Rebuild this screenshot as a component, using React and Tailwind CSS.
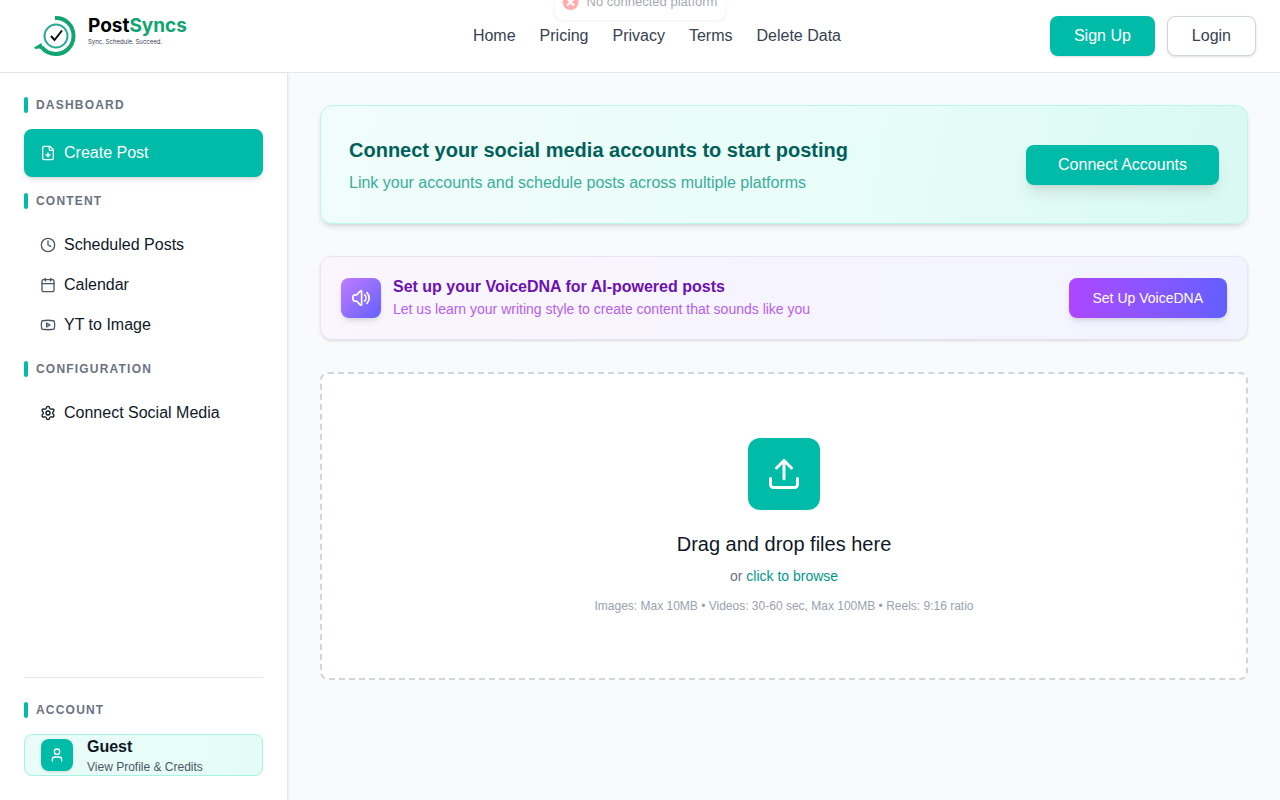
import React from 'react';
import { FilePlus, Clock, Calendar, Youtube, Settings, User, Upload, X } from 'lucide-react';

const NAV_LINKS = ['Home', 'Pricing', 'Privacy', 'Terms', 'Delete Data'];

const CONTENT_ITEMS = [
  { label: 'Scheduled Posts', icon: Clock },
  { label: 'Calendar', icon: Calendar },
  { label: 'YT to Image', icon: Youtube },
];

function Logo() {
  return (
    <a href="#" className="flex w-60 items-center pl-2">
      <svg className="h-12 w-12" viewBox="0 0 48 48" fill="none">
        <path d="M23 6C33.500 5.500 41.500 13.500 41.500 24C41.500 34 33.500 42 24 42C18 42 13 39.500 9.500 35" stroke="#12a571" strokeWidth="4" />
        <path d="M2 35.500L9.500 31L11 38L7.500 36.500L3.500 37Z" fill="#12a571" />
        <circle cx="24" cy="24" r="11.500" stroke="#2fa999" strokeWidth="2" />
        <path d="M19 24L22.500 28L30 18.500" stroke="#0b0f14" strokeWidth="2" />
      </svg>
      <span className="ml-2 flex flex-col pb-3 font-['Inter',sans-serif]">
        <span className="text-[19px] leading-6 font-bold text-black">
          Post<span className="text-[#12a571]">Syncs</span>
        </span>
        <span className="text-[6px] leading-2 text-gray-700">Sync. Schedule. Succeed.</span>
      </span>
    </a>
  );
}

function SpeakerIcon({ className }) {
  return (
    <svg className={className} viewBox="0 0 24 24" fill="none" stroke="currentColor" strokeWidth="2" strokeLinecap="round" strokeLinejoin="round">
      <path d="M19.114 5.636a9 9 0 0 1 0 12.728M16.463 8.288a5.25 5.25 0 0 1 0 7.424M6.75 8.25l4.72-4.72a.75.75 0 0 1 1.28.53v15.88a.75.75 0 0 1-1.28.53l-4.72-4.72H4.51c-.88 0-1.704-.507-1.938-1.354A9.009 9.009 0 0 1 2.25 12c0-.83.112-1.633.322-2.396C2.806 8.756 3.63 8.25 4.51 8.25H6.75Z" />
    </svg>
  );
}

function SectionLabel({ children }) {
  return (
    <h2 className="mb-4 flex items-center gap-2 text-xs font-bold tracking-widest text-gray-500 uppercase">
      <span className="h-4 w-1 rounded-full bg-teal-500" />
      {children}
    </h2>
  );
}

function SidebarItem({ icon: Icon, label, iconClass = 'text-gray-600' }) {
  return (
    <a href="#" className="flex h-10 items-center gap-2 rounded-lg px-4 text-gray-900">
      <Icon className={`h-4 w-4 ${iconClass}`} />
      {label}
    </a>
  );
}

export default function App() {
  return (
    <div className="flex min-h-screen flex-col bg-[#f9fafc] font-['Liberation_Sans',Arial,sans-serif] text-base">
      {/* Toast sliding out of view */}
      <div role="status" className="absolute -top-4 left-1/2 z-20 flex h-9 -translate-x-1/2 items-center gap-2 rounded-lg bg-white px-2 text-[13px] text-gray-700 opacity-45 shadow-sm">
        <span className="flex h-4 w-4 items-center justify-center rounded-full bg-[#ff4b4b]">
          <X className="h-3 w-3 text-white" strokeWidth={4} />
        </span>
        <span className="leading-5">No connected platform</span>
      </div>

      <header className="flex items-center justify-between border-b border-gray-200 bg-white px-6 py-4">
        <div className="-my-1">
          <Logo />
        </div>
        <nav className="flex gap-6 text-gray-700">
          {NAV_LINKS.map((link) => (
            <a key={link} href="#">{link}</a>
          ))}
        </nav>
        <div className="flex gap-3">
          <button className="h-10 rounded-lg bg-teal-500 px-6 text-white shadow-sm">Sign Up</button>
          <button className="h-10 rounded-lg border border-gray-300 bg-white px-6 text-gray-700 shadow-sm">Login</button>
        </div>
      </header>

      <div className="flex flex-1">
        {/* Sidebar */}
        <aside className="flex w-72 shrink-0 flex-col border-r border-gray-200 bg-white p-6 shadow-sm">
          <SectionLabel>Dashboard</SectionLabel>
          <a href="#" className="mb-4 flex h-12 items-center gap-2 rounded-lg bg-teal-500 px-4 text-white shadow-md">
            <FilePlus className="h-4 w-4" />
            Create Post
          </a>

          <SectionLabel>Content</SectionLabel>
          <div className="mb-4">
            {CONTENT_ITEMS.map((item) => (
              <SidebarItem key={item.label} icon={item.icon} label={item.label} />
            ))}
          </div>

          <SectionLabel>Configuration</SectionLabel>
          <SidebarItem icon={Settings} label="Connect Social Media" iconClass="text-gray-900" />

          <div className="mt-auto border-t border-gray-200 pt-6">
            <SectionLabel>Account</SectionLabel>
            <a href="#" className="flex items-center gap-3.5 rounded-lg border border-[#a5f3e0] bg-linear-to-r from-[#eafdf8] to-[#e4fcf7] px-4">
              <span className="flex h-8 w-8 items-center justify-center rounded-lg bg-teal-500 text-white shadow-sm">
                <User className="h-4 w-4" />
              </span>
              <span className="flex flex-col">
                <span className="font-bold text-gray-900">Guest</span>
                <span className="text-xs text-gray-600">View Profile &amp; Credits</span>
              </span>
            </a>
          </div>
        </aside>

        {/* Main area */}
        <main className="flex min-w-0 flex-1 flex-col gap-8 p-8">
          <section className="flex items-center justify-between rounded-xl border border-[#b9f8e8] bg-[linear-gradient(100deg,#f0fdfa,#eafdf9_50%,#d9f9f2)] p-7 shadow-md">
            <div>
              <h1 className="text-xl leading-8 font-bold text-teal-800">Connect your social media accounts to start posting</h1>
              <p className="mt-[5px] text-[#3aad9b]">Link your accounts and schedule posts across multiple platforms</p>
            </div>
            <button className="h-10 rounded-lg bg-teal-500 px-8 text-white shadow-lg">Connect Accounts</button>
          </section>

          <section className="flex items-center justify-between rounded-xl border border-[#e9e3f5] bg-linear-to-r from-purple-50 to-[#f2f4ff] px-5 py-[19px] shadow-sm">
            <div className="flex items-center gap-3">
              <span className="flex h-10 w-10 items-center justify-center rounded-lg bg-linear-to-br from-purple-400 to-indigo-500 text-white shadow-md">
                <SpeakerIcon className="h-5 w-5" />
              </span>
              <div>
                <h2 className="leading-[22px] font-bold text-purple-800">Set up your VoiceDNA for AI-powered posts</h2>
                <p className="text-sm leading-[22px] text-[#b660ea]">Let us learn your writing style to create content that sounds like you</p>
              </div>
            </div>
            <button className="h-10 rounded-lg bg-linear-to-r from-purple-500 to-indigo-500 px-6 text-sm text-white shadow-md">Set Up VoiceDNA</button>
          </section>

          <section className="flex flex-col items-center rounded-lg border-2 border-dashed border-gray-300 bg-white p-16">
            <span className="flex h-18 w-18 items-center justify-center rounded-xl bg-teal-500 text-white">
              <Upload className="h-9 w-9" />
            </span>
            <h2 className="mt-5 text-xl text-gray-900">Drag and drop files here</h2>
            <p className="mt-2 text-sm text-gray-500">
              or <button className="text-teal-600">click to browse</button>
            </p>
            <p className="mt-3 text-xs text-gray-400">Images: Max 10MB • Videos: 30-60 sec, Max 100MB • Reels: 9:16 ratio</p>
          </section>
        </main>
      </div>
    </div>
  );
}
